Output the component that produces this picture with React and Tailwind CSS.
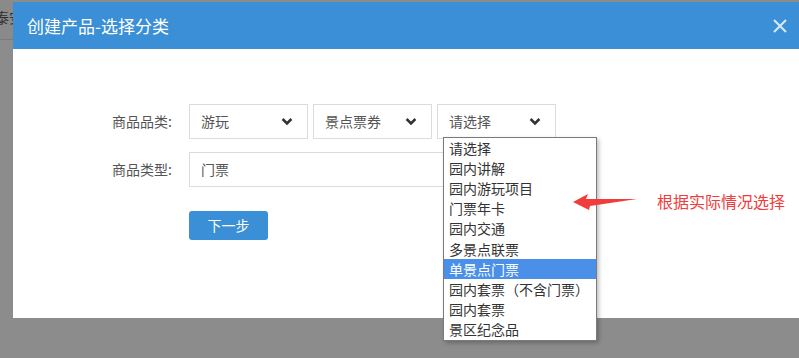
const categoryOptions = [
  '请选择',
  '园内讲解',
  '园内游玩项目',
  '门票年卡',
  '园内交通',
  '多景点联票',
  '单景点门票',
  '园内套票（不含门票）',
  '园内套票',
  '景区纪念品',
]

function Chevron() {
  return (
    <svg width="12" height="9" viewBox="0 0 12 9" className="shrink-0">
      <path d="M1.6 2 L6 6.4 L10.4 2" fill="none" stroke="#333" strokeWidth="2.6" />
    </svg>
  )
}

function SelectBox({ value }) {
  return (
    <div className="flex h-[35px] w-[119px] items-center justify-between border border-[#dcdcdc] bg-white pl-[11px] pr-[14px] text-[14px] text-[#555]">
      <span>{value}</span>
      <Chevron />
    </div>
  )
}

function OptionList() {
  return (
    <div className="absolute left-[443px] top-[137px] w-[154px] border border-[#7a7a7a] bg-white shadow-[2px_2px_4px_rgba(0,0,0,0.25)]">
      {categoryOptions.map((label, index) => (
        <div
          key={label}
          className={
            index === 6
              ? 'flex h-[20.2px] items-center bg-[#4a8fe8] pl-[5px] text-[14px] text-white'
              : 'flex h-[20.2px] items-center pl-[5px] text-[14px] text-[#333]'
          }
        >
          {label}
        </div>
      ))}
    </div>
  )
}

function Annotation() {
  return (
    <>
      <svg
        width="70"
        height="20"
        viewBox="0 0 70 20"
        className="absolute left-[571px] top-[192px]"
      >
        <polygon points="2,10 17,2 15,7 66,7 19,14 18,18" fill="#f23b3b" />
      </svg>
      <span className="absolute left-[657px] top-[190px] text-[16px] leading-[22px] text-[#f23b3b]">
        根据实际情况选择
      </span>
    </>
  )
}

export default function App() {
  return (
    <div className="relative h-[358px] w-[799px] overflow-hidden bg-[#8c8c8c] font-['Noto_Sans_CJK_SC','Noto_Sans',sans-serif]">
      <div className="h-[40px] w-[13px] overflow-hidden border-b border-[#7a7a7a] bg-[#8a8a8a]">
        <span className="ml-[-5px] block pt-[7px] text-[14px] whitespace-nowrap text-[#2e2e2e]">泰安</span>
      </div>

      <div className="absolute left-[13px] top-[2px] flex h-[316px] w-[800px] flex-col bg-white">
        <div className="flex h-[47px] items-center justify-between bg-[#3a8fd6] pl-[14px] pr-[26px]">
          <span className="text-[17px] text-white">创建产品-选择分类</span>
          <svg width="14" height="14" viewBox="0 0 14 14">
            <path d="M1 1 L13 13 M13 1 L1 13" stroke="#d4e7f8" strokeWidth="2.2" />
          </svg>
        </div>

        <div className="flex flex-col gap-[13px] pl-[99px] pt-[55px]">
          <div className="flex items-center">
            <span className="w-[77px] text-[14px] text-[#555]">商品品类:</span>
            <div className="flex gap-[5px]">
              <SelectBox value="游玩" />
              <SelectBox value="景点票券" />
              <SelectBox value="请选择" />
            </div>
          </div>
          <div className="flex items-center">
            <span className="w-[77px] text-[14px] text-[#555]">商品类型:</span>
            <div className="flex h-[35px] w-[367px] items-center border border-[#dcdcdc] pl-[11px] text-[14px] text-[#555]">
              门票
            </div>
          </div>
          <div className="mt-[11px] pl-[77px]">
            <button
              type="button"
              className="h-[29px] w-[79px] rounded-[3px] bg-[#3a8fd6] text-[14px] text-white"
            >
              下一步
            </button>
          </div>
        </div>
      </div>

      <OptionList />
      <Annotation />
    </div>
  )
}
